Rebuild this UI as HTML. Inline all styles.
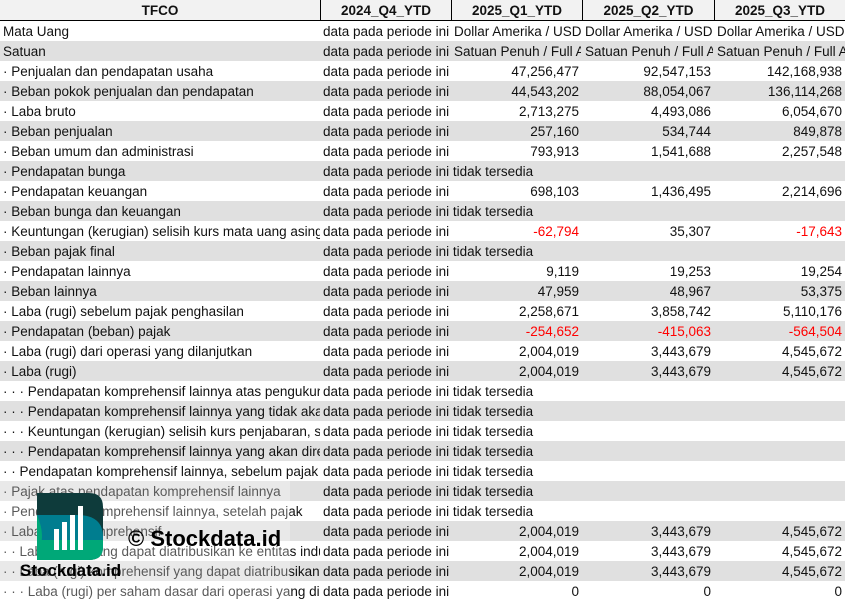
<!DOCTYPE html>
<html><head><meta charset="utf-8"><style>
body{margin:0;width:845px;height:601px;overflow:hidden;background:#fff;font-family:"Liberation Sans",sans-serif;font-size:13.5px;color:#111;position:relative}
.r{position:absolute;left:0;width:845px;height:20px;line-height:21px}
.g{background:#e0e0e0}
.c{position:absolute;top:0;height:20px;overflow:hidden;white-space:nowrap}
.c1{left:3px;width:317px}.c2{left:323px;width:128px}.c3{left:454px;width:127px}.c4{left:585px;width:128px}.c5{left:717px;width:128px}
.n{text-align:right}.c3.n{left:451px;width:128px}.c4.n{left:582px;width:129px}.c5.n{left:714px;width:128px}
.red{color:#ff0000}
.h{position:absolute;top:0;left:0;width:845px;height:20px;background:#f2f2f2;border-bottom:1px solid #000;font-weight:bold;line-height:21px}
.h div{position:absolute;top:0;height:20px;text-align:center;border-right:1px solid #000}
</style></head><body>
<div class="h">
<div style="left:0;width:320px">TFCO</div>
<div style="left:321px;width:130px">2024_Q4_YTD</div>
<div style="left:452px;width:130px">2025_Q1_YTD</div>
<div style="left:583px;width:131px">2025_Q2_YTD</div>
<div style="left:715px;width:130px;border:none">2025_Q3_YTD</div>
</div>
<div id="rows"></div>
<script>
var R=[
["Mata Uang","Dollar Amerika / USD","Dollar Amerika / USD","Dollar Amerika / USD",1],
["Satuan","Satuan Penuh / Full Amount","Satuan Penuh / Full Amount","Satuan Penuh / Full Amount",1],
["· Penjualan dan pendapatan usaha","47,256,477","92,547,153","142,168,938"],
["· Beban pokok penjualan dan pendapatan","44,543,202","88,054,067","136,114,268"],
["· Laba bruto","2,713,275","4,493,086","6,054,670"],
["· Beban penjualan","257,160","534,744","849,878"],
["· Beban umum dan administrasi","793,913","1,541,688","2,257,548"],
["· Pendapatan bunga"],
["· Pendapatan keuangan","698,103","1,436,495","2,214,696"],
["· Beban bunga dan keuangan"],
["· Keuntungan (kerugian) selisih kurs mata uang asing","-62,794","35,307","-17,643"],
["· Beban pajak final"],
["· Pendapatan lainnya","9,119","19,253","19,254"],
["· Beban lainnya","47,959","48,967","53,375"],
["· Laba (rugi) sebelum pajak penghasilan","2,258,671","3,858,742","5,110,176"],
["· Pendapatan (beban) pajak","-254,652","-415,063","-564,504"],
["· Laba (rugi) dari operasi yang dilanjutkan","2,004,019","3,443,679","4,545,672"],
["· Laba (rugi)","2,004,019","3,443,679","4,545,672"],
["· · · Pendapatan komprehensif lainnya atas pengukuran kembali"],
["· · · Pendapatan komprehensif lainnya yang tidak akan direklasifikasi"],
["· · · Keuntungan (kerugian) selisih kurs penjabaran, setelah pajak"],
["· · · Pendapatan komprehensif lainnya yang akan direklasifikasi"],
["· · Pendapatan komprehensif lainnya, sebelum pajak"],
["· Pajak atas pendapatan komprehensif lainnya"],
["· Pendapatan komprehensif lainnya, setelah pajak"],
["· Laba (rugi) komprehensif","2,004,019","3,443,679","4,545,672"],
["· · Laba (rugi) yang dapat diatribusikan ke entitas induk","2,004,019","3,443,679","4,545,672"],
["· · Laba (rugi) komprehensif yang dapat diatribusikan ke entitas induk","2,004,019","3,443,679","4,545,672"],
["· · · Laba (rugi) per saham dasar dari operasi yang dilanjutkan","0","0","0"]];
var h="";
R.forEach(function(r,i){
var y=21+i*20;h+='<div class="r'+(i%2?' g':'')+'" style="top:'+y+'px"><div class="c c1">'+r[0]+'</div>';
if(r.length==1){h+='<div class="c c2" style="width:400px">data pada periode ini tidak tersedia</div>';}
else{h+='<div class="c c2">data pada periode ini tidak tersedia</div>';
var t=r[4]?'':' n';
for(var k=1;k<4;k++){h+='<div class="c c'+(k+2)+t+(r[k][0]=='-'?' red':'')+'">'+r[k]+'</div>';}}
h+='</div>';});
document.getElementById('rows').innerHTML=h;
</script>
<div style="position:absolute;left:0;top:481px;width:290px;height:120px;background:rgba(255,255,255,0.3)"></div>
<svg style="position:absolute;left:37px;top:493px" width="67" height="68" viewBox="0 0 67 68">
<defs><clipPath id="cp"><path d="M0 0H52Q66 0 66 14V54Q66 67 52 67H0Z"/></clipPath></defs>
<g clip-path="url(#cp)">
<rect width="67" height="68" fill="#0e3b3b"/>
<path d="M0 22H40Q66 22 66 44V47H0Z" fill="#007d8f"/>
<rect y="47" width="67" height="21" fill="#00a878"/>
<path d="M0 22Q10 45 0 60Z" fill="#00a878"/>
</g>
<rect x="17" y="36" width="5" height="21" fill="#fff"/>
<rect x="25" y="29" width="5" height="28" fill="#fff"/>
<rect x="33" y="22" width="5" height="35" fill="#fff"/>
<rect x="41" y="13" width="5" height="44" fill="#fff"/>
</svg>
<div style="position:absolute;left:128px;top:525px;font-weight:bold;font-size:22px;color:#000;line-height:28px">© Stockdata.id</div>
<div style="position:absolute;left:20px;top:560px;font-weight:bold;font-size:17px;color:#000;line-height:22px">Stockdata.id</div>
</body></html>
